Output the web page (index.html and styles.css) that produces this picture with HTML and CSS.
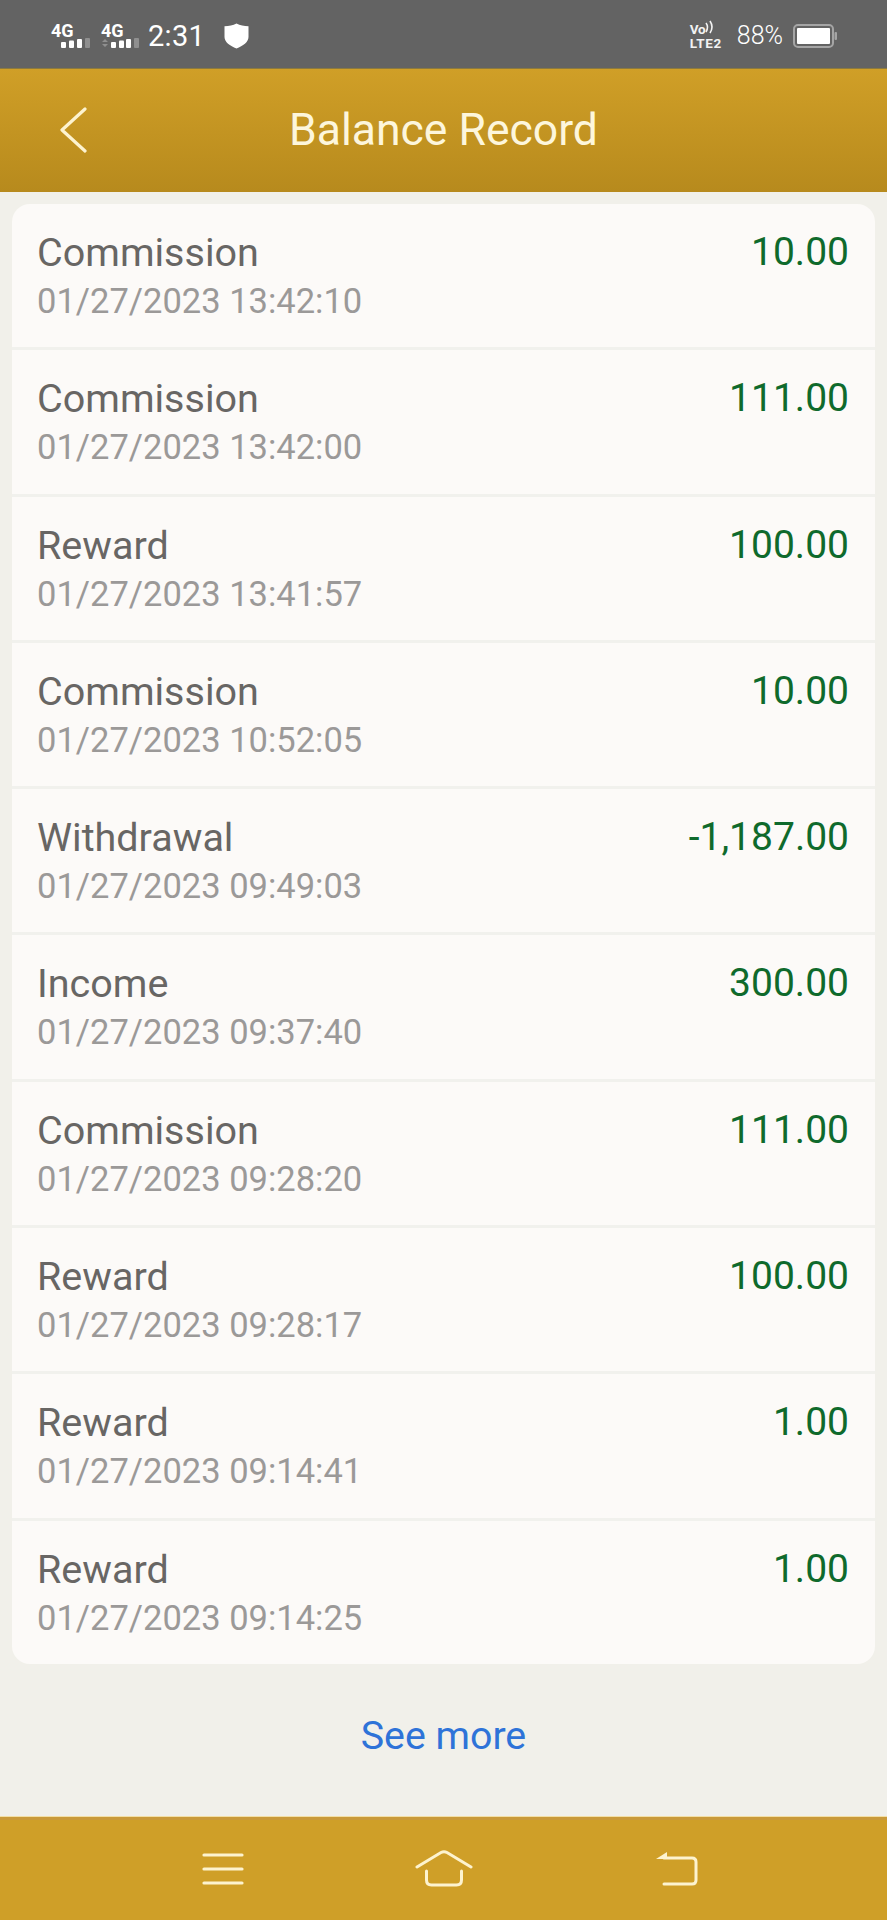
FILE: index.html
```html
<!DOCTYPE html>
<html lang="en">
<head>
<meta charset="utf-8">
<title>Balance Record</title>
<link rel="stylesheet" href="styles.css">
</head>
<body>
<div class="phone">
  <div class="status">
    <div class="status-left">
      <span class="net"><span class="net-label">4G</span><svg class="bars" width="29" height="10" viewBox="0 0 29 10"><rect x="0" y="4" width="5" height="6" rx="1" fill="#fff"/><rect x="8" y="2.500" width="5" height="7.500" rx="1" fill="#fff"/><rect x="16" y="1" width="5" height="9" rx="1" fill="#fff"/><rect x="24" y="0" width="5" height="10" rx="1" fill="#8f8f8f"/></svg></span>
      <span class="net net-second"><span class="net-label">4G</span><svg class="bars" width="38" height="10" viewBox="0 0 38 10"><path d="M1 4l3-3 3 3zM1 6l3 3 3-3z" fill="#8f8f8f"/><rect x="10" y="4" width="5" height="6" rx="1" fill="#fff"/><rect x="18" y="2.500" width="5" height="7.500" rx="1" fill="#fff"/><rect x="25" y="1" width="5" height="9" rx="1" fill="#fff"/><rect x="33" y="0" width="5" height="10" rx="1" fill="#8f8f8f"/></svg></span>
      <span class="clock">2:31</span>
      <svg class="shield" width="25" height="26" viewBox="0 0 25 26"><path d="M12.500 0.500C16 2.500 20 3 24.500 3.200V14C24.500 19 19 23 12.500 25.500C6 23 0.500 19 0.500 14V3.200C5 3 9 2.500 12.500 0.500Z" fill="#fff"/></svg>
    </div>
    <div class="status-right">
      <span class="volte"><span class="volte-top">Vo<svg class="waves" width="10" height="14" viewBox="0 0 10 14"><path d="M1 3Q4 7 1 12M5 1Q9 7 5 13" fill="none" stroke="#f2f2f2" stroke-width="1.600"/></svg></span><span class="volte-bottom">LTE2</span></span>
      <span class="pct">88%</span>
      <svg class="battery" width="45" height="24" viewBox="0 0 45 24"><rect x="1" y="1" width="39" height="22" rx="4" fill="none" stroke="#a5a5a5" stroke-width="2"/><rect x="4" y="4" width="33" height="16" rx="1" fill="#fff"/><rect x="41.500" y="8" width="2.500" height="8" rx="1" fill="#a5a5a5"/></svg>
    </div>
  </div>

  <header class="topbar">
    <svg class="back" width="32" height="46" viewBox="0 0 32 46"><path d="M28 2 L5 23 L28 44" fill="none" stroke="#fdf3cf" stroke-width="3.200" stroke-linecap="round" stroke-linejoin="round"/></svg>
    <h1 class="title">Balance Record</h1>
  </header>

  <main class="content">
    <ul class="card">
      <li class="row"><div class="info"><span class="kind">Commission</span><span class="date">01/27/2023 13:42:10</span></div><span class="amount">10.00</span></li>
      <li class="row"><div class="info"><span class="kind">Commission</span><span class="date">01/27/2023 13:42:00</span></div><span class="amount">111.00</span></li>
      <li class="row"><div class="info"><span class="kind">Reward</span><span class="date">01/27/2023 13:41:57</span></div><span class="amount">100.00</span></li>
      <li class="row"><div class="info"><span class="kind">Commission</span><span class="date">01/27/2023 10:52:05</span></div><span class="amount">10.00</span></li>
      <li class="row"><div class="info"><span class="kind">Withdrawal</span><span class="date">01/27/2023 09:49:03</span></div><span class="amount">-1,187.00</span></li>
      <li class="row"><div class="info"><span class="kind">Income</span><span class="date">01/27/2023 09:37:40</span></div><span class="amount">300.00</span></li>
      <li class="row"><div class="info"><span class="kind">Commission</span><span class="date">01/27/2023 09:28:20</span></div><span class="amount">111.00</span></li>
      <li class="row"><div class="info"><span class="kind">Reward</span><span class="date">01/27/2023 09:28:17</span></div><span class="amount">100.00</span></li>
      <li class="row"><div class="info"><span class="kind">Reward</span><span class="date">01/27/2023 09:14:41</span></div><span class="amount">1.00</span></li>
      <li class="row"><div class="info"><span class="kind">Reward</span><span class="date">01/27/2023 09:14:25</span></div><span class="amount">1.00</span></li>
    </ul>
    <a class="more" href="#">See more</a>
  </main>

  <nav class="navbar">
    <svg class="nav-menu" width="42" height="32" viewBox="0 0 42 32"><path d="M2 2H40M2 16H40M2 30H40" fill="none" stroke="#fdf3cf" stroke-width="3.200" stroke-linecap="round"/></svg>
    <svg class="nav-home" width="58" height="37" viewBox="0 0 58 37"><path d="M2 17 L26 2.500Q29 1 32 2.500L56 17" fill="none" stroke="#fdf3cf" stroke-width="3" stroke-linecap="round"/><path d="M11.500 21V30Q11.500 35 16.500 35H41.500Q46.500 35 46.500 30V21" fill="none" stroke="#fdf3cf" stroke-width="3" stroke-linecap="round"/></svg>
    <svg class="nav-back" width="42" height="35" viewBox="0 0 42 35"><path d="M0 8 L11 1V8Z" fill="#fdf3cf"/><path d="M8 7H36Q40 7 40 11V29Q40 33 36 33H8" fill="none" stroke="#fdf3cf" stroke-width="3" stroke-linecap="round"/></svg>
  </nav>
</div>
</body>
</html>
```

FILE: styles.css
```css
* { box-sizing: border-box; }
html, body { margin: 0; padding: 0; }
body { background: #f1f0ea; font-family: Roboto, "Liberation Sans", sans-serif; }
.phone { width: 887px; height: 1920px; display: flex; flex-direction: column; overflow: hidden; }

.status { height: 68px; background: #636363; display: flex; align-items: center; justify-content: space-between; padding: 3px 49px 0 51px; color: #fff; }
.status-left, .status-right { display: flex; align-items: center; }
.net { display: flex; flex-direction: column; width: 40px; }
.net-second { width: 38px; margin-left: 10px; }
.net-label { font-size: 18px; font-weight: 700; line-height: 15px; }
.bars { display: block; margin-left: 10px; }
.net-second .bars { margin-left: 0; }
.clock { font-size: 29px; margin-left: 9px; letter-spacing: 0.3px; }
.shield { margin-left: 19px; }
.volte { display: flex; flex-direction: column; font-size: 13.500px; font-weight: 700; line-height: 14px; margin-right: 15px; color: #f2f2f2; }
.volte-top { display: flex; align-items: center; height: 14px; letter-spacing: -0.3px; }
.waves { margin-top: -4px; }
.volte-bottom { letter-spacing: 0.6px; }
.pct { font-size: 25px; font-weight: 300; margin-right: 10px; }

.topbar { height: 124px; border-top: 1px solid #8c7a3e; background: linear-gradient(#d09f27, #b78a1d); position: relative; display: flex; align-items: center; justify-content: center; padding-bottom: 2px; }
.back { position: absolute; left: 57px; top: 38px; }
.title { margin: 0; font-size: 44.500px; font-weight: 400; color: #fdf6dc; }

.content { flex: 1; padding: 12px 12px 0; display: flex; flex-direction: column; }
.card { list-style: none; margin: 0; padding: 0; background: #fcfaf8; border-radius: 18px; overflow: hidden; }
.row { height: 146.300px; padding: 25px 26px 0 25px; display: flex; justify-content: space-between; align-items: flex-start; border-bottom: 3px solid #f1f1ed; }
.row:last-child { border-bottom: 0; height: 143px; }
.info { display: flex; flex-direction: column; }
.kind { font-size: 39.500px; line-height: 47px; color: #686664; }
.date { font-size: 34.500px; line-height: 47px; margin-top: 2px; color: #9b9998; }
.amount { font-size: 39px; line-height: 47px; color: #0f6a2c; }
.more { margin-top: 50px; text-align: center; font-size: 39.300px; line-height: 44px; color: #2e73d8; text-decoration: none; }

.navbar { height: 104px; border-top: 1px solid #f3dfa6; box-shadow: inset 0 3px 0 #c99a3a; background: #cf9f28; display: flex; align-items: center; padding: 0 0 0 202px; }
.nav-home { margin-left: 171px; }
.nav-back { margin-left: 183px; }
```
